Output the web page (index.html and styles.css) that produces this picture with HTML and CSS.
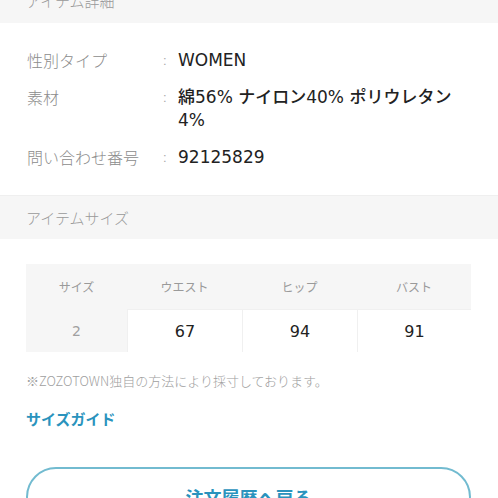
FILE: index.html
```html
<!DOCTYPE html>
<html lang="ja">
<head>
<meta charset="utf-8">
<link rel="stylesheet" href="styles.css">
</head>
<body>
<div class="page">
  <div class="band band-top">アイテム詳細</div>
  <div class="details">
    <div class="row"><div class="label">性別タイプ</div><div class="colon">:</div><div class="value">WOMEN</div></div>
    <div class="row"><div class="label">素材</div><div class="colon">:</div><div class="value">綿56% ナイロン40% ポリウレタン 4%</div></div>
    <div class="row"><div class="label">問い合わせ番号</div><div class="colon">:</div><div class="value">92125829</div></div>
  </div>
  <div class="band">アイテムサイズ</div>
  <div class="size">
    <div class="table">
      <div class="th c1">サイズ</div>
      <div class="th">ウエスト</div>
      <div class="th">ヒップ</div>
      <div class="th">バスト</div>
      <div class="td c1">2</div>
      <div class="td">67</div>
      <div class="td">94</div>
      <div class="td">91</div>
    </div>
    <p class="note">※ZOZOTOWN独自の方法により採寸しております。</p>
    <a class="guide">サイズガイド</a>
    <div class="button">注文履歴へ戻る</div>
  </div>
</div>
</body>
</html>
```
FILE: styles.css
```css
html, body {
  margin: 0;
  padding: 0;
  background: #fff;
}
body {
  font-family: "Liberation Sans", "Noto Sans CJK JP", sans-serif;
  overflow: hidden;
}
.page {
  width: 498px;
}
.band {
  height: 44px;
  line-height: 44px;
  background: #f6f6f6;
  color: #999;
  font-size: 15px;
  padding: 0 26px;
  font-family: "Noto Sans CJK JP", sans-serif;
  font-weight: 300;
  border-top: 1px solid #efefef;
  box-sizing: border-box;
}
.band-top {
  margin-top: -21px;
  border-top: none;
}
.details {
  padding: 26px 26px 26px 27px;
  display: flex;
  flex-direction: column;
  gap: 14px;
}
.row {
  display: grid;
  grid-template-columns: 136px 15px 1fr;
  line-height: 23px;
  font-size: 16px;
}
.label {
  color: #8c8c8c;
  font-family: "Noto Sans CJK JP", sans-serif;
  font-weight: 300;
}
.colon {
  color: #aaa;
  font-size: 13px;
}
.value {
  color: #222;
  font-size: 17px;
  font-family: "DejaVu Sans", "Noto Sans CJK JP", sans-serif;
  font-weight: 500;
  line-break: strict;
}
.size {
  padding: 25px 27px 0 26px;
}
.table {
  display: grid;
  grid-template-columns: 101px 115px 115px 114px;
  grid-template-rows: 45px 43px;
  background: #f6f6f6;
  width: 445px;
}
.th, .td {
  display: flex;
  align-items: center;
  justify-content: center;
}
.th {
  color: #9a9a9a;
  font-size: 12px;
  font-family: "Noto Sans CJK JP", sans-serif;
}
.td {
  background: #fff;
  color: #222;
  font-size: 16px;
  font-family: "DejaVu Sans", sans-serif;
  border-left: 1px solid #f0f0f0;
  border-top: 1px solid #f0f0f0;
}
.td.c1 {
  background: #f6f6f6;
  color: #a0a0a0;
  font-size: 14px;
  border: none;
}
.note {
  margin: 20px 0 0;
  font-size: 13px;
  line-height: 18px;
  color: #a0a0a0;
  font-family: "Noto Sans CJK JP", sans-serif;
  font-weight: 300;
}
.guide {
  display: block;
  margin-top: 18px;
  font-size: 15px;
  line-height: 22px;
  font-weight: bold;
  color: #2a93bd;
  font-family: "Noto Sans CJK JP", sans-serif;
}
.button {
  margin-top: 37px;
  width: 445px;
  height: 60px;
  box-sizing: border-box;
  border: 2px solid #72bbd0;
  border-radius: 30px;
  text-align: center;
  line-height: 56px;
  font-size: 18px;
  font-weight: bold;
  color: #2a93bd;
  font-family: "Noto Sans CJK JP", sans-serif;
}
```
